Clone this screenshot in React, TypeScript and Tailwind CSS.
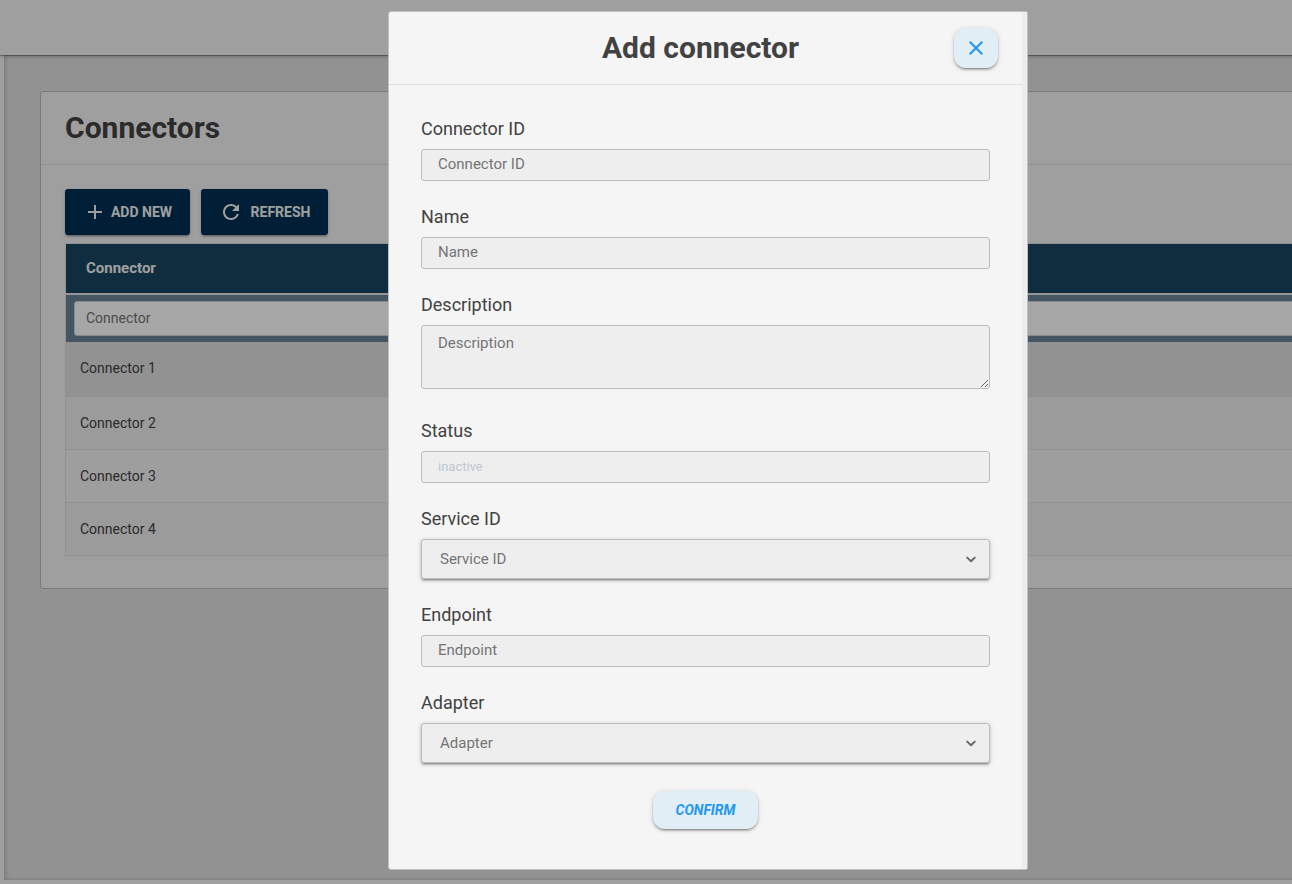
import type { ReactNode } from "react";
import { MdAdd, MdClose, MdRefresh } from "react-icons/md";

const rows = ["Connector 1", "Connector 2", "Connector 3", "Connector 4"];

const raised =
  "shadow-[0_3px_1px_-2px_rgba(0,0,0,0.2),0_2px_2px_0_rgba(0,0,0,0.14),0_1px_5px_0_rgba(0,0,0,0.12)]";
const raisedSoft =
  "shadow-[0_3px_1px_-2px_rgba(0,0,0,0.2),0_2px_2px_0_rgba(0,0,0,0.18),0_1px_5px_0_rgba(0,0,0,0.18)]";
const box =
  "block w-full rounded-[3px] border border-[#bdbdbd] bg-[#eeeeee] px-4 text-[15px] text-[#424242] placeholder:text-[#757575] placeholder:opacity-100 outline-none";

function Field({ id, label, children }: { id: string; label: string; children: ReactNode }) {
  return (
    <div className="flex flex-col gap-2">
      <label htmlFor={id} className="text-lg leading-6 text-[#424242]">
        {label}
      </label>
      {children}
    </div>
  );
}

function TextField({ id, label }: { id: string; label: string }) {
  return (
    <Field id={id} label={label}>
      <input id={id} type="text" placeholder={label} className={`${box} h-8 pb-0.5`} />
    </Field>
  );
}

function SelectField({ id, label }: { id: string; label: string }) {
  return (
    <Field id={id} label={label}>
      <div className="relative">
        <select
          id={id}
          defaultValue=""
          className={`block h-10 w-full appearance-none rounded-[3px] border border-[#bdbdbd] bg-[#eeeeee] px-[18px] text-[15px] text-[#757575] outline-none ${raisedSoft}`}
        >
          <option value="">{label}</option>
        </select>
        <svg
          aria-hidden="true"
          viewBox="0 0 20 20"
          className="pointer-events-none absolute top-1/2 right-[9px] size-5 -translate-y-1/2"
          fill="none"
          stroke="#666666"
          strokeWidth="1.9"
          strokeLinecap="round"
          strokeLinejoin="round"
        >
          <path d="M6.2 8.6 10 12.3l3.8-3.7" />
        </svg>
      </div>
    </Field>
  );
}

function ConnectorsPage() {
  return (
    <div className="flex min-h-screen flex-col bg-[#f5f5f5]">
      <header className="relative h-[55px] bg-[#f5f5f5] shadow-[0_1px_4px_0_rgba(0,0,0,0.3),0_1px_0_0_rgba(0,0,0,0.25)]" />
      <div className="flex flex-1">
        <aside className="w-1" />
        <main className="flex-1 bg-[#e1e1e1] px-9 pt-9 shadow-[inset_2px_0_4px_0_rgba(0,0,0,0.12),inset_0_-1px_3px_0_rgba(0,0,0,0.08)]">
          <section className="rounded-[3px] border border-[#bdbdbd] bg-[#f5f5f5]">
            <div className="border-b border-[#e0e0e0] px-6 py-4">
              <h1 className="text-[30px] leading-10 font-bold text-[#424242]">Connectors</h1>
            </div>
            <div className="px-6 pt-6 pb-8">
              <div className="flex gap-[11px]">
                <button
                  type="button"
                  className={`flex h-[46px] w-[125px] items-center justify-center gap-1 rounded-[3px] bg-[#003053] text-sm font-bold text-[#f5f5f5] ${raised}`}
                >
                  <MdAdd aria-hidden="true" className="size-6" />
                  ADD NEW
                </button>
                <button
                  type="button"
                  className={`flex h-[46px] w-[127px] items-center justify-center gap-2 rounded-[3px] bg-[#003053] text-sm font-bold text-[#f5f5f5] ${raised}`}
                >
                  <MdRefresh aria-hidden="true" className="size-6" />
                  REFRESH
                </button>
              </div>
              <table className="mt-2 w-full border-collapse border border-[#e0e0e0] text-left text-sm text-[#424242]">
                <thead>
                  <tr className="h-[50px] border-b-2 border-[#e5e5e5] bg-[#1a4562]">
                    <th scope="col" className="px-5 text-[15px] font-bold text-[#f5f5f5]">
                      Connector
                    </th>
                  </tr>
                  <tr className="h-12 bg-[#698398]">
                    <td className="px-2">
                      <input
                        type="text"
                        aria-label="Filter by connector"
                        placeholder="Connector"
                        className="block h-[35px] w-full rounded-[3px] border border-[#d0d4d8] bg-white px-[11px] text-sm placeholder:text-[#757575] outline-none"
                      />
                    </td>
                  </tr>
                </thead>
                <tbody>
                  {rows.map((name, i) => (
                    <tr
                      key={name}
                      className={`border-b border-[#e0e0e0] ${
                        i === 0
                          ? "h-[55px] bg-[#e1e1e1]"
                          : i % 2 === 1
                            ? "h-[53px] bg-[#eeeeee]"
                            : "h-[53px] bg-[#f3f3f3]"
                      }`}
                    >
                      <td className="px-3.5 pb-px">{name}</td>
                    </tr>
                  ))}
                </tbody>
              </table>
            </div>
          </section>
        </main>
      </div>
      <footer className="ml-1 h-1" />
    </div>
  );
}

function AddConnectorDialog() {
  return (
    <div className="absolute inset-0 flex items-start justify-center bg-black/35 pt-[11px]">
      <div
        role="dialog"
        aria-modal="true"
        aria-labelledby="dialog-title"
        className="flex w-[640px] rounded-[3px] border border-[#c0c0c0] bg-[#f5f5f5]"
      >
        <div className="flex-1">
          <div className="flex items-center border-b border-[#e0e0e0] px-6 py-4">
            <h2
              id="dialog-title"
              className="flex-1 pl-[34px] text-center text-[30px] leading-10 font-bold text-[#424242]"
            >
              Add connector
            </h2>
            <button
              type="button"
              aria-label="Close"
              className={`flex h-10 w-11 items-center justify-center rounded-xl bg-[#e1eef6] text-[#2196f3] ${raisedSoft}`}
            >
              <MdClose aria-hidden="true" className="size-6" />
            </button>
          </div>
          <form className="flex flex-col gap-6 px-8 pt-8 pb-10">
            <TextField id="connector-id" label="Connector ID" />
            <TextField id="name" label="Name" />
            <div className="pb-1.5">
              <Field id="description" label="Description">
                <textarea
                  id="description"
                  placeholder="Description"
                  className={`${box} h-16 resize-y py-1.5 leading-[22px]`}
                />
              </Field>
            </div>
            <Field id="status" label="Status">
              <input
                id="status"
                type="text"
                disabled
                value="inactive"
                className="block h-8 w-full rounded-[3px] border border-[#bdbdbd] bg-[#eeeeee] px-4 pb-0.5 text-[13px] text-[#c0c8d2]"
              />
            </Field>
            <SelectField id="service-id" label="Service ID" />
            <TextField id="endpoint" label="Endpoint" />
            <SelectField id="adapter" label="Adapter" />
            <div className="flex justify-center pt-1">
              <button
                type="button"
                className={`h-[38px] rounded-xl bg-[#e1eef6] px-[23px] text-sm font-bold text-[#2196f3] italic ${raisedSoft}`}
              >
                CONFIRM
              </button>
            </div>
          </form>
        </div>
        <div className="w-[5px] bg-[#ededed]" />
      </div>
    </div>
  );
}

export default function App() {
  return (
    <div className="overflow-hidden font-['Roboto',sans-serif]">
      <div className="relative min-h-screen min-w-[1416px]">
        <ConnectorsPage />
        <AddConnectorDialog />
      </div>
    </div>
  );
}
